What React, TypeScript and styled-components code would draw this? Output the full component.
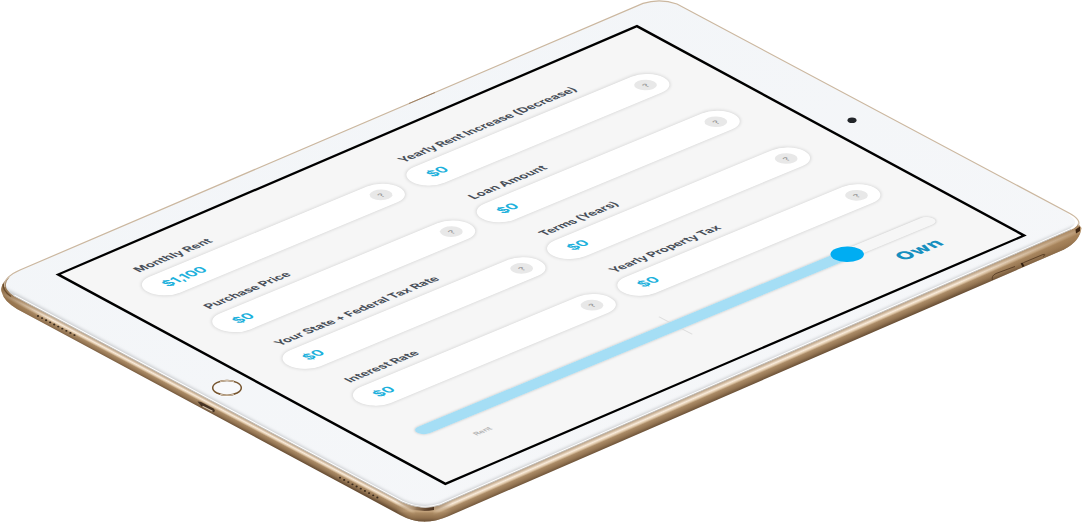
import React from "react";
import styled, { createGlobalStyle } from "styled-components";

const GlobalStyle = createGlobalStyle`
  body {
    margin: 0;
    background: #fff;
    overflow: hidden;
    font-family: Inter, "Open Sans", sans-serif;
  }
`;

const Stage = styled.main`
  position: relative;
  width: 1082px;
  height: 522px;
  overflow: hidden;
`;

const Body = styled.svg`
  display: block;
`;

/* Landscape screen laid flat in the isometric plane. */
const Screen = styled.div`
  position: absolute;
  top: 0;
  left: 0;
  box-sizing: border-box;
  width: 1024px;
  height: 768px;
  border: 5px solid #000;
  background: #f6f6f6;
  transform-origin: 0 0;
  transform: matrix(0.5679, -0.2437, 0.5075, 0.2744, 55.5, 274.4);
`;

const Calculator = styled.section`
  position: absolute;
  top: 0;
  left: 0;
  box-sizing: border-box;
  width: 1024px;
  height: 768px;
  padding: 46px 0 0 52px;
  transform-origin: 0 0;
  transform: matrix(0.5664, -0.2352, 0.5059, 0.2645, 57, 272);
`;

const Fields = styled.div`
  display: grid;
  grid-template-columns: 443.5px 443.5px;
  column-gap: 23.5px;
  grid-auto-rows: 139px;
`;

const Field = styled.div`
  display: flex;
  flex-direction: column;
`;

const Label = styled.label<{ $spacing: number }>`
  height: 45px;
  padding-left: 28px;
  color: #484f59;
  font-size: 19.8px;
  font-weight: 700;
  line-height: 40px;
  letter-spacing: ${(p) => p.$spacing}px;
  white-space: nowrap;
`;

const Pill = styled.div`
  display: flex;
  align-items: center;
  justify-content: space-between;
  box-sizing: border-box;
  height: 60px;
  padding: 0 17px 0 29px;
  border-radius: 30px;
  background: #fff;
  box-shadow: 0 0 6px 1px rgba(0, 0, 0, 0.14);
`;

const Value = styled.span`
  color: #1db1dc;
  font-size: 23px;
  font-weight: 700;
`;

const Help = styled.span`
  display: flex;
  align-items: center;
  justify-content: center;
  width: 30px;
  height: 30px;
  border-radius: 50%;
  background: #e8e8e8;
  color: #9c9c9c;
  font-size: 14px;
  font-weight: 600;
`;

const Track = styled.div`
  position: relative;
  box-sizing: border-box;
  width: 911px;
  height: 24px;
  margin-top: 40px;
  border-radius: 12px;
  background: #f6f6f6;
  box-shadow: 0 0 4px 1px rgba(0, 0, 0, 0.16);
`;

const Tick = styled.i`
  position: absolute;
  left: 455px;
  top: -21px;
  width: 2px;
  height: 66px;
  background: #dedede;
`;

const Fill = styled.div`
  position: relative;
  width: 762px;
  height: 24px;
  border-radius: 12px;
  background: #a5def5;
`;

const Knob = styled.div`
  position: absolute;
  right: -19px;
  top: -10px;
  width: 44px;
  height: 44px;
  border-radius: 50%;
  background: #00adf2;
`;

const Ends = styled.div`
  display: flex;
  align-items: center;
  justify-content: space-between;
  width: 822px;
  margin: 20.5px 0 0 53px;
  line-height: 40px;
`;

const Rent = styled.span`
  color: #b3b3b3;
  font-size: 13px;
  font-weight: 600;
`;

const Own = styled.span`
  color: #168fbf;
  font-size: 31px;
  font-weight: 800;
  letter-spacing: 0.8px;
`;

const fields = [
  { label: "Monthly Rent", value: "$1,100", spacing: 0.2 },
  { label: "Yearly Rent Increase (Decrease)", value: "$0", spacing: -0.06 },
  { label: "Purchase Price", value: "$0", spacing: 0 },
  { label: "Loan Amount", value: "$0", spacing: 0.2 },
  { label: "Your State + Federal Tax Rate", value: "$0", spacing: 0.05 },
  { label: "Terms (Years)", value: "$0", spacing: -0.15 },
  { label: "Interest Rate", value: "$0", spacing: 0.1 },
  { label: "Yearly Property Tax", value: "$0", spacing: -0.05 },
];

const dots = Array.from({ length: 10 }, (_, i) => i);

const FACE =
  "M20 270 L643 3.4 Q660 -2 677 4 L1069 213 Q1086 223 1071 229.5 L440 505 Q422 511 402 502 L14 296 Q-5 283 20 270Z";

function SideStops() {
  return (
    <>
      <stop offset="0" stopColor="#b8a38b" />
      <stop offset=".1" stopColor="#ccb59a" />
      <stop offset=".26" stopColor="#f9ebdb" />
      <stop offset=".38" stopColor="#dfc7a8" />
      <stop offset=".5" stopColor="#ab8b66" />
      <stop offset=".76" stopColor="#927351" />
      <stop offset="1" stopColor="#6a5036" />
    </>
  );
}

function Tablet() {
  return (
    <Body width="1082" height="522" viewBox="0 0 1082 522">
      <defs>
        <linearGradient id="left" gradientUnits="userSpaceOnUse" x1="200" y1="394.8" x2="194.6" y2="405">
          <SideStops />
        </linearGradient>
        <linearGradient id="right" gradientUnits="userSpaceOnUse" x1="590" y1="439.5" x2="595.8" y2="452.8">
          <SideStops />
        </linearGradient>
        <linearGradient id="bottom" gradientUnits="userSpaceOnUse" x1="0" y1="507" x2="0" y2="521.5">
          <stop offset="0" stopColor="#a88c6c" />
          <stop offset=".28" stopColor="#c6a67f" />
          <stop offset=".42" stopColor="#ab8a63" />
          <stop offset=".76" stopColor="#8f6f4c" />
          <stop offset="1" stopColor="#6a5036" />
        </linearGradient>
        <linearGradient id="blend" gradientUnits="userSpaceOnUse" x1="396" y1="0" x2="452" y2="0">
          <stop offset="0" stopColor="#fff" stopOpacity="0" />
          <stop offset=".35" stopColor="#fff" />
          <stop offset=".65" stopColor="#fff" />
          <stop offset="1" stopColor="#fff" stopOpacity="0" />
        </linearGradient>
        <mask id="cornerMask" maskUnits="userSpaceOnUse" x="380" y="480" width="90" height="42">
          <rect x="396" y="480" width="56" height="42" fill="url(#blend)" />
        </mask>
        <linearGradient id="face" x1="0" y1="0" x2="1" y2="1">
          <stop offset="0" stopColor="#f2f5f8" />
          <stop offset="1" stopColor="#f6f7f9" />
        </linearGradient>
        <linearGradient id="corner" gradientUnits="userSpaceOnUse" x1="404" y1="0" x2="436" y2="0">
          <stop offset="0" stopColor="#e3cdb2" stopOpacity="0" />
          <stop offset=".4" stopColor="#8f7355" />
          <stop offset=".75" stopColor="#5c412a" />
          <stop offset=".93" stopColor="#4d3521" />
          <stop offset="1" stopColor="#d9c1a3" />
        </linearGradient>
        <linearGradient id="shadeRight" gradientUnits="userSpaceOnUse" x1="960" y1="0" x2="1078" y2="0">
          <stop offset="0" stopColor="#a58056" stopOpacity="0" />
          <stop offset="1" stopColor="#a58056" stopOpacity=".75" />
        </linearGradient>
        <linearGradient id="shadeLeft" gradientUnits="userSpaceOnUse" x1="0" y1="0" x2="50" y2="0">
          <stop offset="0" stopColor="#8c6a44" stopOpacity=".9" />
          <stop offset="1" stopColor="#a58056" stopOpacity="0" />
        </linearGradient>
        <clipPath id="clip"><path d={FACE} /></clipPath>
        <filter id="soft"><feGaussianBlur stdDeviation="1.5" /></filter>
      </defs>
      <path d="M14 275 Q-2 283 2 293 Q4 301 17 309 L400 515 Q412 521.6 425 521.6 L425 490Z" fill="url(#left)" />
      <path d="M14 275 Q-2 283 2 293 Q4 301 17 309 L60 332 L60 300Z" fill="url(#shadeLeft)" />
      <path d="M424 490 L424 521.6 Q436 521.6 449 516 L1064 249.5 Q1080 241 1081.5 228 L1070 214Z" fill="url(#right)" />
      <path d="M960 250 L960 294.6 L1064 249.5 Q1080 241 1081.5 228 L1070 214Z" fill="url(#shadeRight)" />
      <path d="M396 490 L396 512.8 L400 515 Q412 521.6 425 521.6 Q436 521.6 449 516 L452 514.7 V490Z" fill="url(#bottom)" mask="url(#cornerMask)" />
      <path d="M3.5 284 Q2 290 11 296.5" fill="none" stroke="#684b2c" strokeWidth="1.4" />
      <path d="M404 503 L434 505 V510 Q420 513 404 507Z" fill="url(#corner)" />
      <path d="M1075.5 229.5 L1080 226.5 V231 L1076 233.5Z" fill="#3b2411" />
      <path d={FACE} fill="url(#face)" />
      <g clipPath="url(#clip)">
        <path d="M0 288 L402 502 Q422 511 440 505 L1082 225" fill="none" stroke="#cbcdd0" strokeWidth="5" filter="url(#soft)" />
        <path d="M14 296 L402 502 Q422 511 440 505 L1071 229.5 Q1083 222 1069 213" fill="none" stroke="#fff" strokeWidth="3" />
      </g>
      <path d="M14 296 L402 502 Q422 511 440 505 L1071 229.5" fill="none" stroke="#b7b2ac" strokeWidth=".8" />
      <path d="M5 287 Q2 278 20 270 L643 3.4 Q660 -2 677 4 L1069 213 Q1082 220 1078 226" fill="none" stroke="#cbb79f" strokeWidth="1.2" />
      <path d="M409 103.5 L435 92.5" stroke="#98795c" strokeWidth=".9" />
      {dots.map((i) => (
        <g key={i} fill="#39291b">
          <ellipse cx={38 + i * 4.05} cy={316 + i * 2.12} rx="1.1" ry=".9" />
          <ellipse cx={340 + i * 4.15} cy={477.7 + i * 2.2} rx="1.1" ry=".9" />
        </g>
      ))}
      <path d="M197.5 401.5 L201 402 L213.5 408.5 Q216.5 411.5 213 412.3 L201.5 406.5Z" fill="#463222" />
      <path d="M202.5 406.3 L212.5 411.3" stroke="#d9c4aa" strokeWidth="1.2" />
      <path d="M992.5 280 Q991 276 996 273.5 L1015 266.5 M1023 267 Q1021 263 1025 262 L1043 254.5 Q1047 254 1043 256.5" fill="none" stroke="#5d4228" strokeWidth="1" />
      <path d="M1021.5 263 L1023.5 266.5" stroke="#332010" strokeWidth="2" />
      <ellipse cx="227" cy="388.8" rx="14.8" ry="8" fill="#fff" />
      <ellipse cx="227" cy="387.8" rx="14.3" ry="7.4" fill="#f8f9fb" stroke="#76552f" strokeWidth="1.5" />
      <path d="M220 381.4 Q227 379.6 234 381.4 M220 394.2 Q227 396 234 394.2" fill="none" stroke="#d5c3ad" strokeWidth="1.1" />
      <ellipse cx="852" cy="120.3" rx="4.5" ry="2.8" fill="#222529" />
    </Body>
  );
}

export default function App() {
  return (
    <Stage>
      <GlobalStyle />
      <Tablet />
      <Screen />
      <Calculator>
        <Fields>
          {fields.map((f) => (
            <Field key={f.label}>
              <Label $spacing={f.spacing}>{f.label}</Label>
              <Pill>
                <Value>{f.value}</Value>
                <Help>?</Help>
              </Pill>
            </Field>
          ))}
        </Fields>
        <Track>
          <Tick />
          <Fill>
            <Knob />
          </Fill>
        </Track>
        <Ends>
          <Rent>Rent</Rent>
          <Own>Own</Own>
        </Ends>
      </Calculator>
    </Stage>
  );
}
